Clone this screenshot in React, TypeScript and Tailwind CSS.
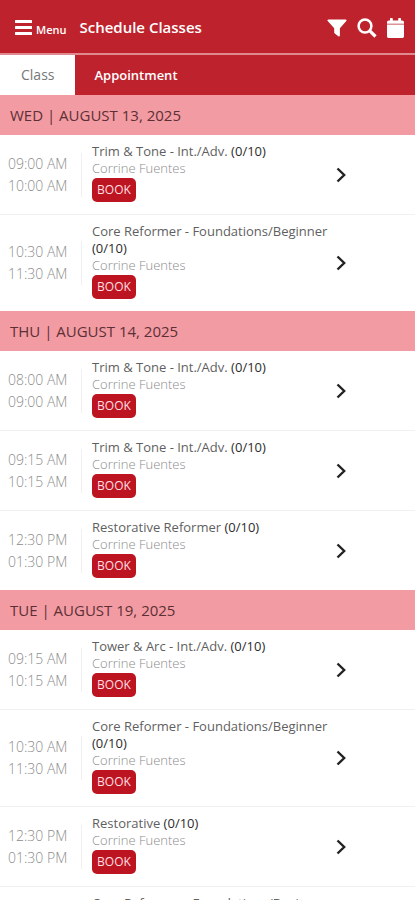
import { useState } from "react";

interface ClassSlot {
  start: string;
  end: string;
  title: string;
  booked: string;
  teacher: string;
}

interface ClassDay {
  date: string;
  slots: ClassSlot[];
}

const TEACHER = "Corrine Fuentes";

function slot(start: string, end: string, title: string): ClassSlot {
  return { start, end, title, booked: "(0/10)", teacher: TEACHER };
}

const DAYS: ClassDay[] = [
  {
    date: "WED | AUGUST 13, 2025",
    slots: [
      slot("09:00 AM", "10:00 AM", "Trim & Tone - Int./Adv."),
      slot("10:30 AM", "11:30 AM", "Core Reformer - Foundations/Beginner"),
    ],
  },
  {
    date: "THU | AUGUST 14, 2025",
    slots: [
      slot("08:00 AM", "09:00 AM", "Trim & Tone - Int./Adv."),
      slot("09:15 AM", "10:15 AM", "Trim & Tone - Int./Adv."),
      slot("12:30 PM", "01:30 PM", "Restorative Reformer"),
    ],
  },
  {
    date: "TUE | AUGUST 19, 2025",
    slots: [
      slot("09:15 AM", "10:15 AM", "Tower & Arc - Int./Adv."),
      slot("10:30 AM", "11:30 AM", "Core Reformer - Foundations/Beginner"),
      slot("12:30 PM", "01:30 PM", "Restorative"),
      slot("05:30 PM", "06:30 PM", "Core Reformer - Foundations/Beginner"),
    ],
  },
];

const TABS = ["Class", "Appointment"] as const;

function MenuIcon() {
  return (
    <svg viewBox="0 0 17 15" className="h-[15px] w-[17px]" fill="currentColor" aria-hidden="true">
      <rect width="17" height="3" rx="0.5" />
      <rect y="6" width="17" height="3" rx="0.5" />
      <rect y="12" width="17" height="3" rx="0.5" />
    </svg>
  );
}

function FilterIcon() {
  return (
    <svg viewBox="0 0 20 18" className="h-[18px] w-5" fill="currentColor" aria-hidden="true">
      <path d="M1.400 0.500h17.200c.9 0 1.200 1 .7 1.600L12.900 9.200v7.400c0 .9-.9 1.200-1.600.7l-3.500-2.700c-.4-.3-.6-.6-.6-1.100V9.200L.7 2.100C.2 1.500.5.500 1.400.5z" />
    </svg>
  );
}

function SearchIcon() {
  return (
    <svg
      viewBox="0 0 20 20"
      className="size-5"
      fill="none"
      stroke="currentColor"
      aria-hidden="true"
    >
      <circle cx="8" cy="8" r="6.400" strokeWidth="2.500" />
      <path d="M12.800 12.800l5.700 5.700" strokeWidth="3.200" />
    </svg>
  );
}

function CalendarIcon() {
  return (
    <svg viewBox="0 0 17 20" className="h-5 w-[17px]" fill="currentColor" aria-hidden="true">
      <path d="M0 5.800V4.300c0-1 .8-1.800 1.800-1.800H3V.7c0-.4.3-.7.700-.7h1.400c.4 0 .7.3.7.7v1.800h5.400V.7c0-.4.3-.7.700-.7h1.400c.4 0 .7.3.7.7v1.800h1.200c1 0 1.800.8 1.800 1.800v1.500z" />
      <path d="M0 6.400h17v11.800c0 1-.8 1.800-1.800 1.800H1.800c-1 0-1.800-.8-1.800-1.800z" />
    </svg>
  );
}

function ChevronIcon() {
  return (
    <svg
      viewBox="0 0 10 16"
      className="h-4 w-[10px]"
      fill="none"
      stroke="currentColor"
      strokeWidth="2.400"
      aria-hidden="true"
    >
      <path d="M1.500 1.500L8.200 8l-6.700 6.500" />
    </svg>
  );
}

function SlotRow({ start, end, title, booked, teacher }: ClassSlot) {
  return (
    <li className="flex items-center border-b border-[#f1f1f1] last:border-b-0">
      <div className="w-[82px] shrink-0 border-r border-[#f0f0f0] pl-2 text-sm leading-[22px] font-light text-[#8c8c8c]">
        <div>{start}</div>
        <div>{end}</div>
      </div>
      <div className="w-[246px] shrink-0 pt-2 pb-3 pl-[10px] text-[13px] leading-[17px]">
        <h3 className="text-[#5f5f5f]">
          {title} <span className="text-[#2c2c2c]">{booked}</span>
        </h3>
        <p className="font-light text-[#8c8c8c]">{teacher}</p>
        <button
          type="button"
          className="mt-px flex h-6 w-11 cursor-pointer items-center justify-center rounded-[5px] bg-[#bd1421] text-xs text-[#ffdfe0]"
        >
          BOOK
        </button>
      </div>
      <button
        type="button"
        aria-label="Class details"
        className="ml-2 cursor-pointer text-[#222222]"
      >
        <ChevronIcon />
      </button>
    </li>
  );
}

export default function App() {
  const [tab, setTab] = useState<(typeof TABS)[number]>("Class");

  return (
    <div className="flex h-screen flex-col bg-white font-['Open_Sans','Noto_Sans',sans-serif]">
      <header className="flex h-[53px] shrink-0 items-center bg-[#be232d] pt-[2px] pr-[11px] pl-[15px] text-white">
        <button type="button" className="flex cursor-pointer items-center gap-1">
          <MenuIcon />
          <span className="pt-1 text-[11px] leading-4 font-semibold">Menu</span>
        </button>
        <h1 className="ml-[13px] text-[15px] font-semibold">Schedule Classes</h1>
        <div className="ml-auto flex items-center gap-[10px]">
          <button type="button" aria-label="Filter" className="cursor-pointer">
            <FilterIcon />
          </button>
          <button type="button" aria-label="Search" className="cursor-pointer">
            <SearchIcon />
          </button>
          <button type="button" aria-label="Calendar" className="cursor-pointer">
            <CalendarIcon />
          </button>
        </div>
      </header>

      <nav className="flex h-[42px] shrink-0 border-t-2 border-[#e08a90] bg-[#be232d] text-sm">
        {TABS.map((name) => (
          <button
            key={name}
            type="button"
            aria-pressed={tab === name}
            onClick={() => setTab(name)}
            className={
              tab === name
                ? "cursor-pointer bg-white px-[21px] text-[#777777]"
                : "cursor-pointer px-[19px] text-[13px] font-semibold text-white"
            }
          >
            {name}
          </button>
        ))}
      </nav>

      <main className="min-h-0 flex-1 overflow-y-auto [scrollbar-width:none]">
        {DAYS.map((day) => (
          <section key={day.date}>
            <h2 className="bg-[#f39ba3] px-[10px] text-[15px] leading-10 text-[#5b3035]">
              {day.date}
            </h2>
            <ul>
              {day.slots.map((s) => (
                <SlotRow key={s.start} {...s} />
              ))}
            </ul>
          </section>
        ))}
      </main>
    </div>
  );
}
